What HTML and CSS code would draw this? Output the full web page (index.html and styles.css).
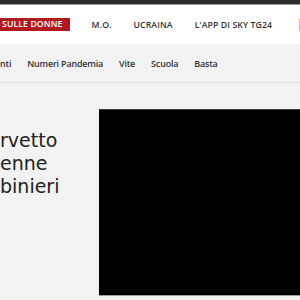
FILE: index.html
```html
<!DOCTYPE html>
<html lang="it">
<head>
  <meta charset="UTF-8">
  <meta name="viewport" content="width=device-width, initial-scale=1.0">
  <title>Sky TG24</title>
  <link rel="stylesheet" href="styles.css">
</head>
<body>
  <div class="topbar"></div>

  <nav class="mainnav">
    <a class="tag-red" href="#">SULLE DONNE</a>
    <a href="#">M.O.</a>
    <a href="#">UCRAINA</a>
    <a href="#">L'APP DI SKY TG24</a>
    <span class="tag-yellow"></span>
  </nav>

  <nav class="subnav">
    <a href="#">nti</a>
    <a href="#">Numeri Pandemia</a>
    <a href="#">Vite</a>
    <a href="#">Scuola</a>
    <a href="#">Basta</a>
  </nav>

  <div class="hero">
    <h2 class="headline">rvetto<br>enne<br>binieri</h2>
    <div class="video"></div>
  </div>
</body>
</html>
```

FILE: styles.css
```css
body {
  margin: 0;
  padding: 0;
  background: #f2f2f2;
  font-family: "Open Sans", "DejaVu Sans", sans-serif;
  overflow: hidden;
}
.topbar {
  height: 4px;
  background: #2b2b2b;
  border-bottom: 1px solid #9a9a9a;
}
.mainnav {
  height: 39px;
  background: #fff;
  display: flex;
  align-items: center;
  gap: 22px;
  white-space: nowrap;
  overflow: hidden;
}
.mainnav a {
  color: #333;
  text-decoration: none;
  font-size: 8.7px;
  font-weight: 600;
  letter-spacing: 0.1px;
}
.mainnav .tag-red {
  background: #b1191f;
  color: #fff;
  padding: 0 7px 0 2px;
  height: 13px;
  line-height: 13px;
}
.tag-yellow {
  display: block;
  width: 40px;
  height: 13px;
  background: #f6c244;
  margin-left: 5px;
}
.subnav {
  height: 38px;
  border-bottom: 1px solid #e4e4e4;
  display: flex;
  align-items: center;
  gap: 16px;
  white-space: nowrap;
}
.subnav a {
  color: #333;
  text-decoration: none;
  font-size: 9px;
  font-weight: 600;
  letter-spacing: -0.2px;
}
.hero {
  display: flex;
  align-items: flex-start;
  padding-top: 26px;
}
.headline {
  width: 99px;
  flex-shrink: 0;
  margin: 20px 0 0;
  font-family: "DejaVu Sans", sans-serif;
  font-size: 19px;
  line-height: 23px;
  font-weight: normal;
  color: #222;
}
.video {
  flex: 1;
  height: 185px;
  background: #000;
  border-top: 1px solid #3a3a3a;
  border-bottom: 1px solid #9c9c9c;
}
```
